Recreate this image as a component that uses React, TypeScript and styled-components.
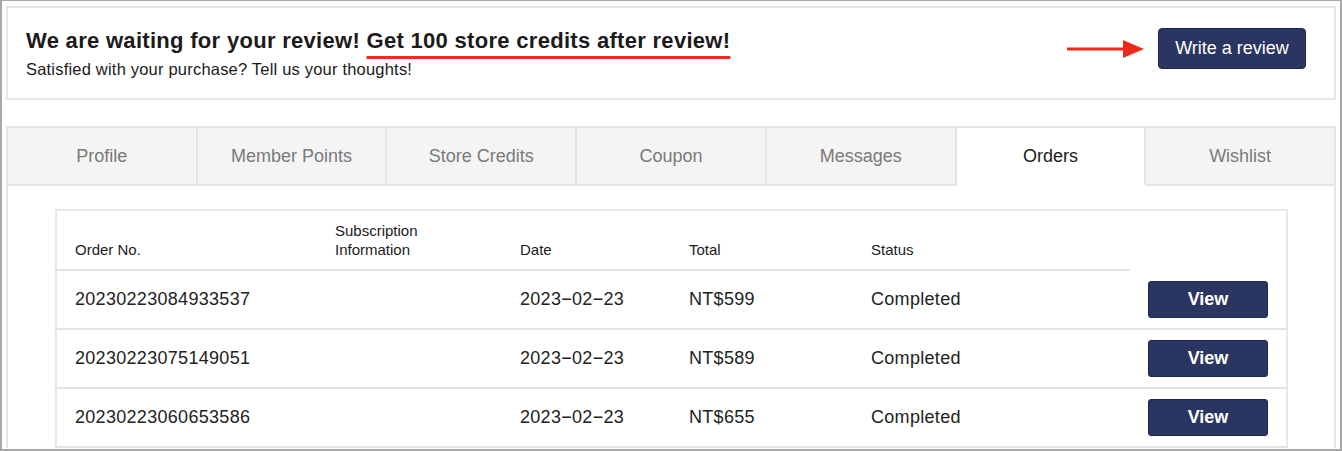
import React from 'react'
import styled, { createGlobalStyle } from 'styled-components'

const GlobalStyle = createGlobalStyle`
  html, body {
    margin: 0;
    padding: 0;
    background: #ffffff;
  }
  body {
    font-family: 'Liberation Sans', Arial, sans-serif;
    color: #222222;
  }
`

const orders = [
  { no: '20230223084933537', date: '2023-02-23', total: 'NT$599', status: 'Completed' },
  { no: '20230223075149051', date: '2023-02-23', total: 'NT$589', status: 'Completed' },
  { no: '20230223060653586', date: '2023-02-23', total: 'NT$655', status: 'Completed' },
]

const tabs = ['Profile', 'Member Points', 'Store Credits', 'Coupon', 'Messages', 'Orders', 'Wishlist']

function Arrow() {
  return (
    <svg width="78" height="20" viewBox="0 0 78 20">
      <line x1="0" y1="10" x2="60" y2="10" stroke="#ee2a1c" strokeWidth="3" />
      <polygon points="56,1 77,10 56,19" fill="#ee2a1c" />
    </svg>
  )
}

function App() {
  return (
    <>
      <GlobalStyle />
      <Frame>
        <ReviewBox>
          <div>
            <Title>
              We are waiting for your review! <Marked>Get 100 store credits after review!</Marked>
            </Title>
            <Sub>Satisfied with your purchase? Tell us your thoughts!</Sub>
          </div>
          <Actions>
            <Arrow />
            <PrimaryButton>Write a review</PrimaryButton>
          </Actions>
        </ReviewBox>

        <Tabs>
          {tabs.map((t) => (
            <Tab key={t} $active={t === 'Orders'}>
              {t}
            </Tab>
          ))}
        </Tabs>

        <Panel>
          <Table>
            <colgroup>
              <col style={{ width: 261 }} />
              <col style={{ width: 185 }} />
              <col style={{ width: 169 }} />
              <col style={{ width: 182 }} />
              <col style={{ width: 277 }} />
              <col style={{ width: 157 }} />
            </colgroup>
            <thead>
              <tr>
                <HeadCell>Order No.</HeadCell>
                <HeadCell>
                  Subscription
                  <br />
                  Information
                </HeadCell>
                <HeadCell>Date</HeadCell>
                <HeadCell>Total</HeadCell>
                <HeadCell>Status</HeadCell>
                <HeadCell $blank />
              </tr>
            </thead>
            <tbody>
              {orders.map((o) => (
                <tr key={o.no}>
                  <Cell>{o.no}</Cell>
                  <Cell />
                  <Cell>{o.date.replace(/-/g, '\u2212')}</Cell>
                  <Cell>{o.total}</Cell>
                  <Cell>{o.status}</Cell>
                  <ActionCell>
                    <ViewButton>View</ViewButton>
                  </ActionCell>
                </tr>
              ))}
            </tbody>
          </Table>
        </Panel>
      </Frame>
    </>
  )
}

export default App

const Frame = styled.div`
  box-sizing: border-box;
  width: 1342px;
  height: 451px;
  overflow: hidden;
  border-style: solid;
  border-color: #a8a8a8;
  border-width: 1px 2px 2px 2px;
  padding: 5px 4px 0 4px;
`

const ReviewBox = styled.div`
  box-sizing: border-box;
  height: 94px;
  border: 2px solid #e6e6e6;
  display: flex;
  justify-content: space-between;
  align-items: flex-start;
  padding: 20px 28px 0 18px;
`

const Title = styled.h1`
  margin: 0;
  font-size: 22px;
  line-height: 26px;
  font-weight: 700;
  letter-spacing: 0.3px;
  color: #1b1b1b;
`

const Marked = styled.span`
  text-decoration: underline;
  text-decoration-color: #ee2a1c;
  text-decoration-thickness: 3px;
  text-underline-offset: 8px;
  text-decoration-skip-ink: none;
`

const Sub = styled.p`
  margin: 5px 0 0;
  font-size: 16.5px;
  line-height: 20px;
  letter-spacing: 0.2px;
  color: #1b1b1b;
`

const Actions = styled.div`
  display: flex;
  align-items: center;
  gap: 13px;
  margin-top: 0;
`

const PrimaryButton = styled.button`
  box-sizing: border-box;
  width: 148px;
  height: 41px;
  border: 1px solid #1e2752;
  border-radius: 4px;
  background: #2b3561;
  color: #ffffff;
  font-family: 'Liberation Sans', Arial, sans-serif;
  font-size: 18px;
  cursor: pointer;
`

const Tabs = styled.div`
  margin-top: 26px;
  display: grid;
  grid-template-columns: repeat(7, 1fr);
  border-top: 2px solid #e4e4e4;
  border-left: 2px solid #e4e4e4;
`

const Tab = styled.div<{ $active?: boolean }>`
  box-sizing: border-box;
  height: 58px;
  display: flex;
  align-items: center;
  justify-content: center;
  font-size: 18px;
  color: ${(p) => (p.$active ? '#1b1b1b' : '#7a7a7a')};
  background: ${(p) => (p.$active ? '#ffffff' : '#f4f4f4')};
  border-right: 2px solid #e4e4e4;
  border-bottom: 2px solid ${(p) => (p.$active ? '#ffffff' : '#e4e4e4')};
`

const Panel = styled.div`
  box-sizing: border-box;
  border-left: 2px solid #e4e4e4;
  border-right: 2px solid #e4e4e4;
  padding: 23px 48px 0 47px;
`

const Table = styled.table`
  width: 100%;
  table-layout: fixed;
  border-collapse: collapse;
  border: 2px solid #e8e8e8;
`

const HeadCell = styled.th<{ $blank?: boolean }>`
  height: 48px;
  padding: 0 0 10px 18px;
  vertical-align: bottom;
  text-align: left;
  font-size: 15px;
  line-height: 19px;
  font-weight: 400;
  color: #1b1b1b;
  border-bottom: ${(p) => (p.$blank ? 'none' : '2px solid #e2e2e2')};
`

const Cell = styled.td`
  height: 57px;
  padding: 0 0 0 18px;
  vertical-align: middle;
  font-size: 18px;
  letter-spacing: 0.3px;
  color: #222222;
  border-bottom: 2px solid #e2e2e2;
`

const ActionCell = styled(Cell)`
  padding: 0 19px 0 18px;
`

const ViewButton = styled.button`
  box-sizing: border-box;
  width: 120px;
  height: 37px;
  border: 1px solid #1e2752;
  border-radius: 3px;
  background: #2b3561;
  color: #ffffff;
  font-family: 'Liberation Sans', Arial, sans-serif;
  font-size: 18px;
  font-weight: 700;
  cursor: pointer;
`
